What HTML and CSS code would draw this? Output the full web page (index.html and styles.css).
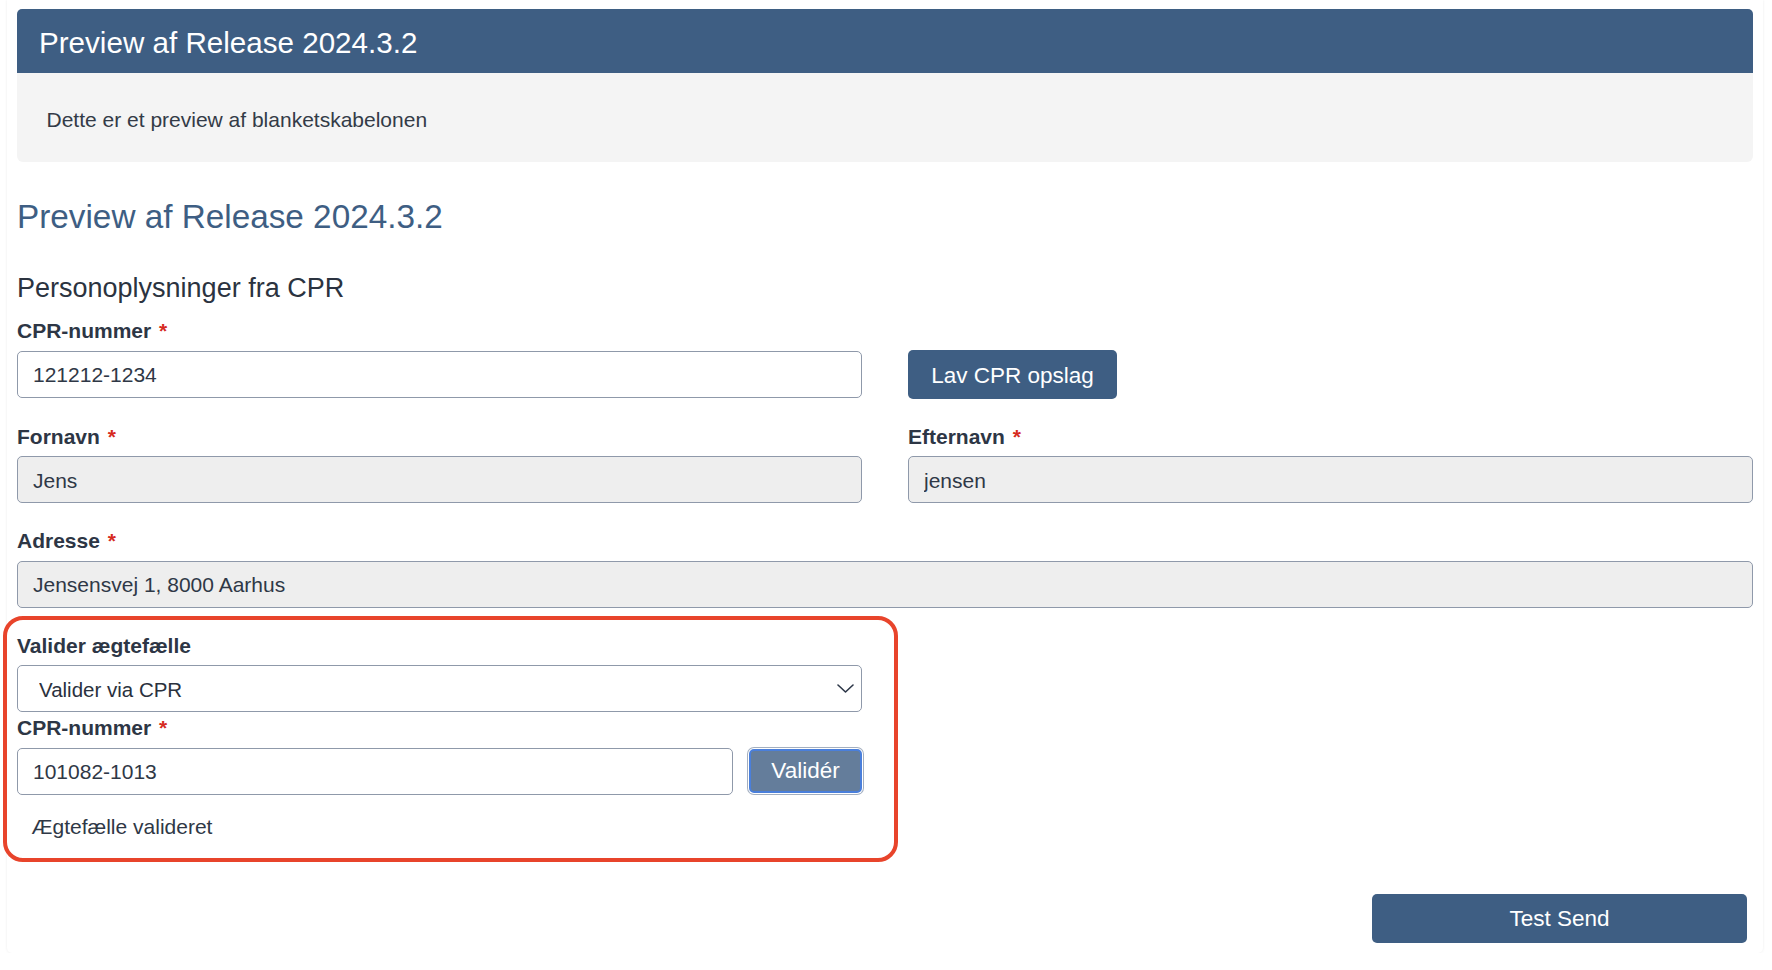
FILE: index.html
```
<!DOCTYPE html>
<html lang="da">
<head>
<meta charset="utf-8">
<title>Preview af Release 2024.3.2</title>
<link rel="stylesheet" href="styles.css">
</head>
<body>
<div class="card">
  <div class="banner"><h1 class="banner-title">Preview af Release 2024.3.2</h1></div>
  <div class="intro">Dette er et preview af blanketskabelonen</div>
  <h1 class="page-title">Preview af Release 2024.3.2</h1>
  <h2 class="section-title">Personoplysninger fra CPR</h2>
  <div class="form-grid">
    <div class="field">
      <label class="label">CPR-nummer <span class="req">*</span></label>
      <input class="input" type="text" value="121212-1234">
    </div>
    <div class="lookup-cell">
      <button class="btn btn-lookup" type="button">Lav CPR opslag</button>
    </div>
    <div class="field">
      <label class="label">Fornavn <span class="req">*</span></label>
      <input class="input input-readonly" type="text" value="Jens" readonly>
    </div>
    <div class="field">
      <label class="label">Efternavn <span class="req">*</span></label>
      <input class="input input-readonly" type="text" value="jensen" readonly>
    </div>
    <div class="field span-2">
      <label class="label">Adresse <span class="req">*</span></label>
      <input class="input input-readonly" type="text" value="Jensensvej 1, 8000 Aarhus" readonly>
    </div>
    <div class="spouse">
      <label class="label">Valider ægtefælle</label>
      <div class="select-wrap">
        <select class="input select">
          <option>Valider via CPR</option>
        </select>
        <svg class="chevron" viewBox="0 0 17 9" width="17" height="9" aria-hidden="true"><path d="M1 1 L8.5 8 L16 1" fill="none" stroke="#2d3748" stroke-width="1.6" stroke-linecap="round" stroke-linejoin="round"/></svg>
      </div>
      <label class="label label-tight">CPR-nummer <span class="req">*</span></label>
      <div class="inline-row">
        <input class="input" type="text" value="101082-1013">
        <button class="btn btn-validate" type="button">Validér</button>
      </div>
      <div class="message">Ægtefælle valideret</div>
    </div>
  </div>
  <div class="actions">
    <button class="btn btn-send" type="button">Test Send</button>
  </div>
</div>
</body>
</html>
```
FILE: styles.css
```
html, body {
  margin: 0;
  padding: 0;
  background: #ffffff;
}

body {
  font-family: "Liberation Sans", Arial, Helvetica, sans-serif;
  font-size: 21px;
  color: #2f3846;
}

.card {
  margin: 0 9px 0 7px;
  padding: 9px 10px 10px;
  box-shadow: 0 0 3px rgba(0, 0, 0, 0.08);
  border-radius: 0 0 5px 5px;
  background: #ffffff;
}

.banner {
  background: #3e5e83;
  height: 64px;
  box-sizing: border-box;
  border-radius: 5px 5px 0 0;
  padding: 3px 0 0 22px;
  display: flex;
  align-items: center;
}

.banner-title {
  margin: 0;
  color: #ffffff;
  font-weight: 400;
  font-size: 29.6px;
  line-height: 34px;
}

.intro {
  background: #f4f4f4;
  height: 89px;
  box-sizing: border-box;
  padding: 34px 29.5px 0;
  line-height: 25px;
  border-radius: 0 0 6px 6px;
  color: #333b47;
}

.page-title {
  margin: 34.5px 0 0;
  font-size: 33.3px;
  line-height: 40px;
  font-weight: 400;
  color: #3e5e83;
}

.section-title {
  margin: 36.3px 0 14.7px;
  font-size: 27px;
  line-height: 31px;
  font-weight: 400;
  color: #2b3340;
}

.form-grid {
  display: grid;
  grid-template-columns: 1fr 1fr;
  column-gap: 46px;
  row-gap: 25px;
}

.label {
  display: block;
  font-weight: 700;
  line-height: 25px;
  margin-bottom: 7.5px;
  color: #2d3645;
}

.req {
  color: #d62b1f;
  margin-left: 2px;
}

.input {
  display: block;
  width: 100%;
  box-sizing: border-box;
  height: 47px;
  margin: 0;
  border: 1px solid #8f99aa;
  border-radius: 5px;
  padding: 2px 15px 0;
  font: inherit;
  color: #2f3846;
  background: #ffffff;
  outline: none;
}

.input-readonly {
  background: #eeeeee;
}

.span-2 {
  grid-column: 1 / span 2;
}

.lookup-cell {
  padding-top: 31.5px;
}

.btn {
  font-family: inherit;
  font-size: 22.5px;
  color: #ffffff;
  background: #3e5e83;
  border: 0;
  border-radius: 5px;
  padding: 0;
  cursor: pointer;
}

.btn-lookup {
  width: 209px;
  height: 49px;
  padding-top: 3px;
}

.spouse {
  position: relative;
}

.spouse::after {
  content: "";
  position: absolute;
  left: -14px;
  top: -17px;
  right: -36px;
  bottom: -23px;
  border: 4px solid #e8442b;
  border-radius: 20px;
  pointer-events: none;
}

.select-wrap {
  position: relative;
}

.select {
  appearance: none;
  -webkit-appearance: none;
  padding-left: 21px;
  font-size: 20.5px;
  color: #2a313d;
}

.chevron {
  position: absolute;
  right: 7.7px;
  top: 50%;
  margin-top: -4.5px;
  width: 17px;
  height: 9px;
}

.label-tight {
  margin-top: 3px;
}

.inline-row {
  display: flex;
  align-items: center;
  gap: 16px;
}

.inline-row .input {
  flex: 1;
  width: auto;
  min-width: 0;
}

.btn-validate {
  flex: none;
  width: 113px;
  height: 44px;
  box-sizing: border-box;
  background: #647d9b;
  border: 2px solid #4a7fdb;
  box-shadow: 0 0 0 1px #ffffff, 0 0 0 2px #a3afc0;
  border-radius: 5px;
}

.message {
  margin-top: 19px;
  padding-left: 14.5px;
  line-height: 25px;
  color: #2f3846;
}

.actions {
  display: flex;
  justify-content: flex-end;
  margin-top: 55.5px;
  padding-right: 6px;
}

.btn-send {
  width: 375px;
  height: 48.7px;
}
```
